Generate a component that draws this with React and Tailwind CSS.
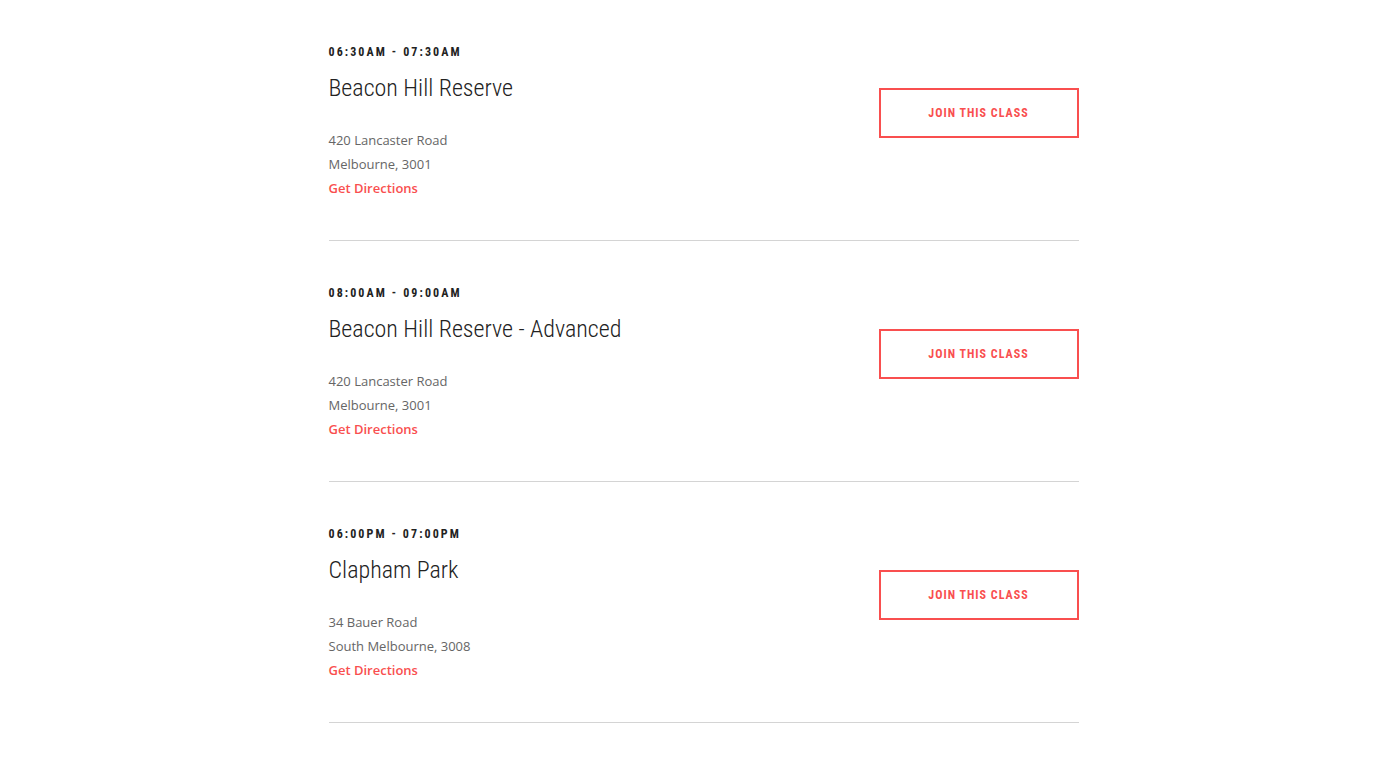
const classes = [
    {
        time: "06:30AM - 07:30AM",
        title: "Beacon Hill Reserve",
        street: "420 Lancaster Road",
        city: "Melbourne, 3001",
    },
    {
        time: "08:00AM - 09:00AM",
        title: "Beacon Hill Reserve - Advanced",
        street: "420 Lancaster Road",
        city: "Melbourne, 3001",
    },
    {
        time: "06:00PM - 07:00PM",
        title: "Clapham Park",
        street: "34 Bauer Road",
        city: "South Melbourne, 3008",
    },
];

function ClassRow({ item }) {
    return (
        <div className="flex items-start justify-between border-b border-[#d4d4d4] pt-[46px] pb-[40px]">
            <div>
                <p className="font-['Roboto',sans-serif] font-bold font-stretch-condensed text-[12px] leading-[12px] tracking-[2.1px] text-[#222]">
                    {item.time}
                </p>
                <h2 className="mt-[15px] font-['Roboto',sans-serif] font-light font-stretch-condensed text-[24px] leading-[30px] tracking-[0px] text-[#222]">
                    {item.title}
                </h2>
                <div className="mt-[25px] font-['Open_Sans',sans-serif] text-[13px] leading-[24px] text-[#666]">
                    <p>{item.street}</p>
                    <p>{item.city}</p>
                    <a href="#" className="font-semibold text-[#f94f4f]">
                        Get Directions
                    </a>
                </div>
            </div>
            <button className="mt-[42px] w-[200px] h-[50px] border-2 border-[#f94f4f] font-['Roboto',sans-serif] font-bold font-stretch-condensed text-[12px] tracking-[1px] text-[#f94f4f]">
                JOIN THIS CLASS
            </button>
        </div>
    );
}

export default function App() {
    return (
        <main className="min-h-screen bg-white">
            <div className="w-[758px] mx-auto pl-[8px]">
                {classes.map((item) => (
                    <ClassRow key={item.time} item={item} />
                ))}
            </div>
        </main>
    );
}
